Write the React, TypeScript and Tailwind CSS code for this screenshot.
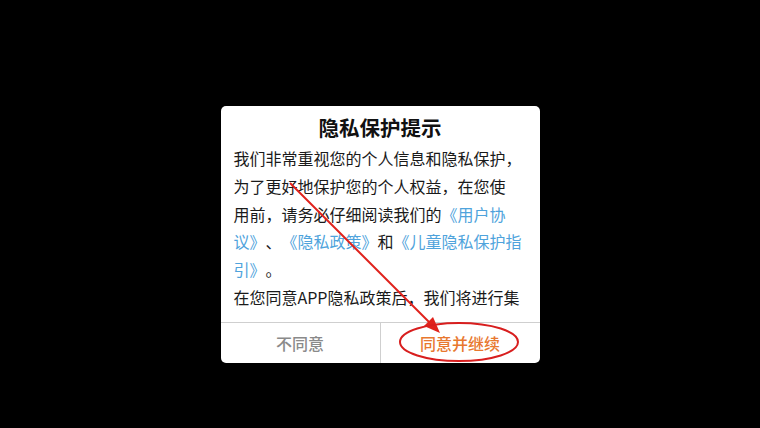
import React from "react";

const font = { fontFamily: '"Noto Sans CJK SC", "Noto Sans", sans-serif' };

function Link({ children }: { children: React.ReactNode }) {
  return <span className="text-[#4fa3dc]">{children}</span>;
}

export default function App() {
  return (
    <div className="relative w-[760px] h-[428px] bg-black overflow-hidden [text-spacing-trim:space-all]" style={font}>
      <div className="flex justify-center pt-[106px]">
        <div className="w-[319px] h-[257px] bg-white rounded-[5px] flex flex-col overflow-hidden">
          <div className="pt-[7px] h-[35px] text-center text-[20.5px] leading-[28px] font-bold text-[#111]">
            隐私保护提示
          </div>
          <div className="mt-[4px] h-[177px] overflow-hidden px-[13px] text-[16px] leading-[27.8px] text-[#1a1a1a] whitespace-nowrap">
            <div>我们非常重视您的个人信息和隐私保护，</div>
            <div>为了更好地保护您的个人权益，在您使</div>
            <div>
              用前，请务必仔细阅读我们的<Link>《用户协</Link>
            </div>
            <div>
              <Link>议》</Link>、<Link>《隐私政策》</Link>和<Link>《儿童隐私保护指</Link>
            </div>
            <div>
              <Link>引》</Link>。
            </div>
            <div>在您同意APP隐私政策后，我们将进行集</div>
          </div>
          <div className="h-px bg-[#cfcfcf]" />
          <div className="flex flex-1">
            <div className="flex-1 flex items-center justify-center text-[16px] font-medium text-[#8a8a8a]">
              不同意
            </div>
            <div className="w-px bg-[#cfcfcf]" />
            <div className="flex-1 flex items-center justify-center text-[16px] font-medium text-[#e8782f]">
              同意并继续
            </div>
          </div>
        </div>
      </div>
      <svg className="absolute inset-0 pointer-events-none" width="760" height="428" viewBox="0 0 760 428">
        <line x1="290" y1="183" x2="430" y2="323" stroke="#e0221c" strokeWidth="2" />
        <polygon points="440,333 424,326 433,317" fill="#e0221c" />
        <ellipse cx="459" cy="342" rx="59" ry="19" fill="none" stroke="#d81e1e" strokeWidth="2" />
      </svg>
    </div>
  );
}
